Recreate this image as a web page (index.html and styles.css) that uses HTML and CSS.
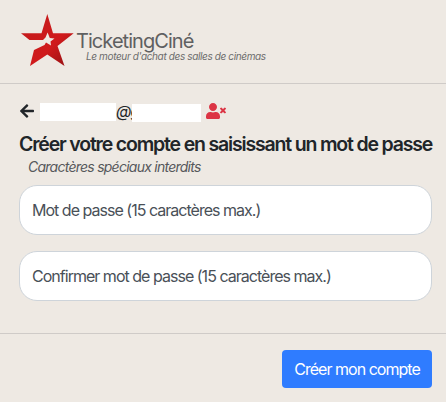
FILE: index.html
```html
<!DOCTYPE html>
<html lang="fr">
<head>
    <meta charset="UTF-8">
    <meta name="viewport" content="width=device-width, initial-scale=1.0">
    <title>TicketingCiné</title>
    <link rel="stylesheet" href="styles.css">
</head>
<body>

<header class="header">
    <svg class="logo-star" viewBox="0 0 54 53" width="54" height="53">
        <defs>
            <linearGradient id="red" x1="0" y1="0" x2="1" y2="1">
                <stop offset="0" stop-color="#c01c1c"/>
                <stop offset="0.6" stop-color="#d01a1c"/>
                <stop offset="1" stop-color="#8c1012"/>
            </linearGradient>
        </defs>
        <path fill="url(#red)" d="M27.300 0 L33 19.300 H53.700 L37.500 32 L44.500 52 L27.300 40.500 L10 52 L14 36 L24.500 31 L26 28.500 L31 31.500 L30.500 27.500 L34.500 24.500 L29.800 24 L27.600 18.500 L25.500 23.500 L23 26 H9.500 L1 19.300 H21.500 Z"/>
    </svg>
    <div class="brand">
        <span class="brand-name">TicketingCiné</span>
        <span class="brand-slogan">Le moteur d'achat des salles de cinémas</span>
    </div>
</header>

<form class="content">
    <div class="account">
        <svg class="back" viewBox="0 0 448 512" width="14" height="16">
            <path fill="#212529" d="M257.500 445.100l-22.200 22.200c-9.400 9.400-24.600 9.400-33.900 0L7 273c-9.400-9.400-9.400-24.600 0-33.900L201.400 44.700c9.400-9.400 24.600-9.400 33.900 0l22.200 22.200c9.500 9.500 9.300 25-.4 34.300L136.600 216H424c13.300 0 24 10.700 24 24v32c0 13.300-10.700 24-24 24H136.600l120.500 114.800c9.800 9.300 10 24.800.4 34.300z"/>
        </svg>
        <span class="mask mask-user"></span>
        <span class="email">@g</span>
        <span class="mask mask-domain"></span>
        <svg class="user-times" viewBox="0 0 640 512" width="20" height="16">
            <path fill="#dc3545" d="M589.600 240l45.600-45.600c6.300-6.300 6.300-16.500 0-22.800l-22.800-22.800c-6.300-6.300-16.500-6.300-22.800 0L544 194.400l-45.600-45.600c-6.300-6.300-16.500-6.300-22.800 0l-22.800 22.800c-6.300 6.300-6.300 16.500 0 22.800l45.600 45.600-45.600 45.600c-6.300 6.300-6.300 16.500 0 22.800l22.800 22.800c6.300 6.300 16.500 6.300 22.800 0l45.600-45.600 45.600 45.600c6.300 6.300 16.500 6.300 22.800 0l22.800-22.800c6.300-6.300 6.300-16.500 0-22.800L589.600 240zM224 256c70.700 0 128-57.300 128-128S294.700 0 224 0 96 57.300 96 128s57.300 128 128 128zm89.600 32h-16.700c-22.200 10.200-46.900 16-72.900 16s-50.600-5.800-72.900-16h-16.700C60.200 288 0 348.200 0 422.400V464c0 26.500 21.500 48 48 48h352c26.500 0 48-21.500 48-48v-41.600c0-74.200-60.200-134.400-134.400-134.400z"/>
        </svg>
    </div>
    <h1 class="title">Créer votre compte en saisissant un mot de passe</h1>
    <p class="hint">Caractères spéciaux interdits</p>
    <input class="field" type="password" placeholder="Mot de passe (15 caractères max.)">
    <input class="field" type="password" placeholder="Confirmer mot de passe (15 caractères max.)">
</form>

<footer class="footer">
    <button class="btn" type="button">Créer mon compte</button>
</footer>

</body>
</html>
```
FILE: styles.css
```css
* {
    box-sizing: border-box;
}

body {
    margin: 0;
    font-family: Inter, "Liberation Sans", sans-serif;
    font-size: 16px;
    line-height: 1.5;
    letter-spacing: -0.98px;
    color: #212529;
    background-color: #eee9e3;
}

.header {
    display: flex;
    align-items: flex-start;
    height: 84px;
    padding: 14px 20px 0;
    border-bottom: 1px solid #cfcbc8;
}

.logo-star {
    flex: none;
}

.brand {
    display: flex;
    flex-direction: column;
    margin-left: 2px;
    padding-top: 16px;
    color: #5f6061;
    white-space: nowrap;
}

.brand-name {
    font-size: 20px;
    line-height: 22px;
    letter-spacing: -0.95px;
}

.brand-slogan {
    margin-top: -2px;
    margin-left: 10px;
    font-size: 10px;
    line-height: 12px;
    font-style: italic;
    letter-spacing: -0.37px;
    color: #6c6c6c;
}

.content {
    display: flex;
    flex-direction: column;
    height: 249px;
    padding: 16px 14px 0 19px;
}

.account {
    display: flex;
    align-items: center;
    height: 24px;
}

.back {
    margin-top: -2px;
    margin-left: 1px;
}

.mask {
    height: 18px;
    background-color: #fff;
}

.mask-user {
    width: 76px;
    margin-left: 6px;
}

.email {
    width: 16px;
    margin-top: -2px;
    white-space: nowrap;
    font-style: italic;
}

.mask-domain {
    position: relative;
    width: 69px;
    margin-top: 2px;
}

.user-times {
    margin-top: -2px;
    margin-left: 5px;
}

.title {
    margin: 8px 0 0;
    font-size: 19.5px;
    font-weight: 600;
    line-height: 24px;
    letter-spacing: -1.18px;
    white-space: nowrap;
}

.hint {
    margin: 0 0 0 9px;
    font-size: 14px;
    line-height: 21px;
    font-style: italic;
    letter-spacing: -0.75px;
    color: #56585b;
}

.field {
    width: 413px;
    height: 50px;
    flex: none;
    margin: 8px 0;
    padding: 0 12px;
    border: 1px solid #ced4da;
    border-radius: 18px;
    font: inherit;
    letter-spacing: inherit;
    background-color: #fff;
}

.field::placeholder {
    color: #495057;
    opacity: 1;
}

.footer {
    display: flex;
    justify-content: flex-end;
    height: 69px;
    padding: 16px 14px 0;
    border-top: 1px solid #cfcbc8;
}

.btn {
    width: 150px;
    height: 38px;
    padding: 0;
    border: none;
    border-radius: 4px;
    font: inherit;
    letter-spacing: inherit;
    color: #fff;
    background-color: #2f7cff;
    cursor: pointer;
}
```
